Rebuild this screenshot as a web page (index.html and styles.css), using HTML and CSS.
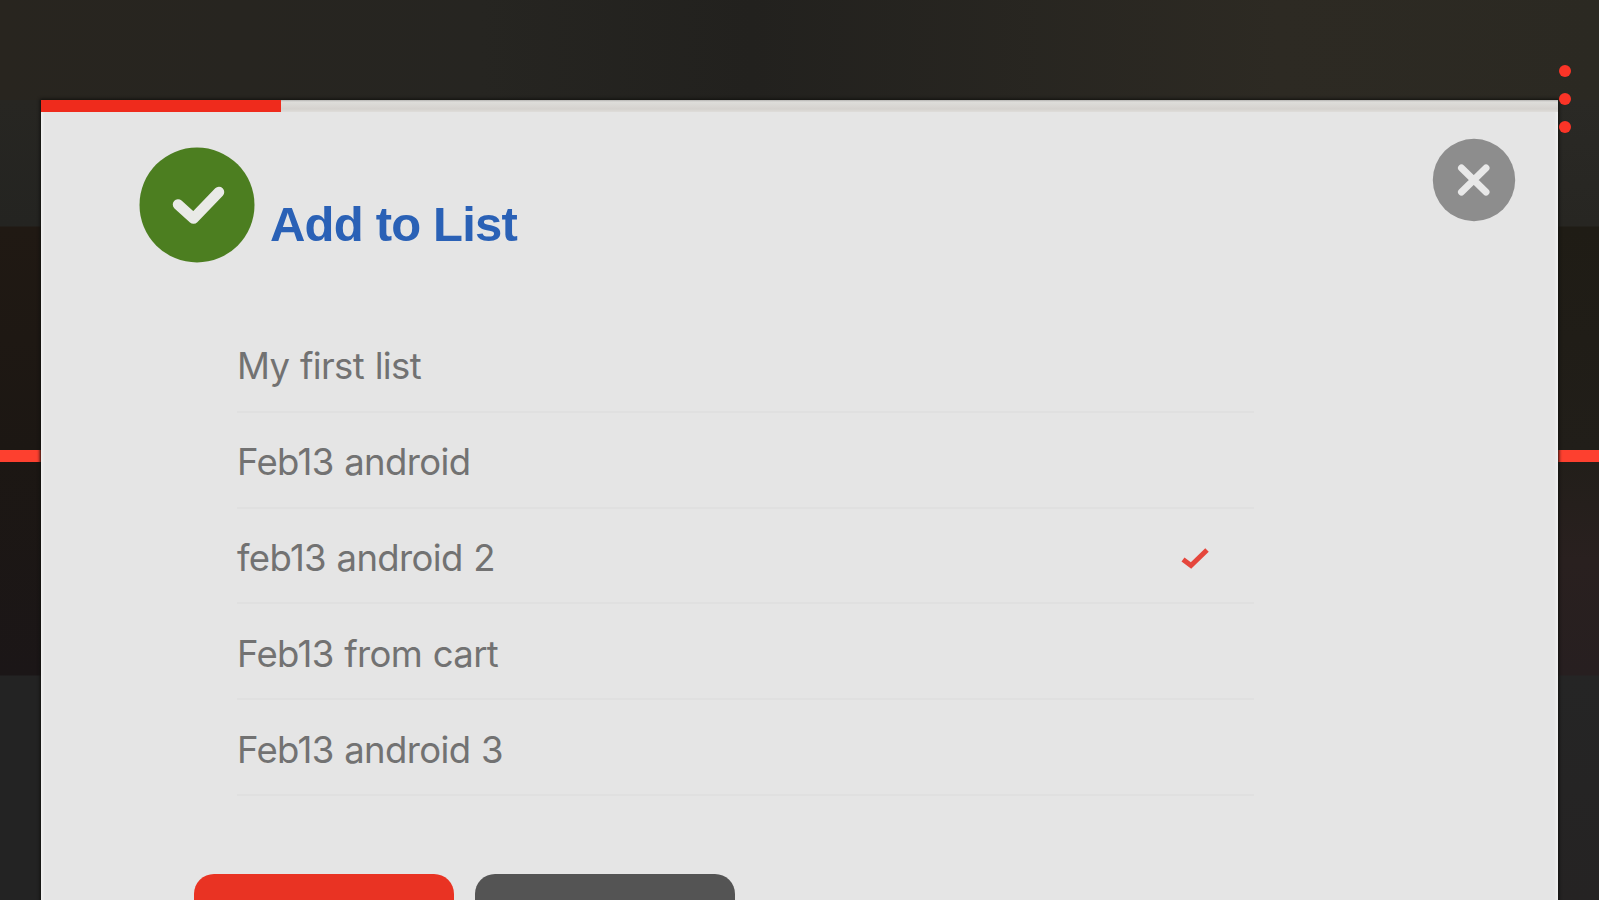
FILE: index.html
```html
<!DOCTYPE html>
<html lang="en">
<head>
    <meta charset="UTF-8">
    <meta name="viewport" content="width=device-width, initial-scale=1.0">
    <title>Add to List</title>
    <link rel="stylesheet" href="styles.css">
</head>
<body>
    <div class="modal">
        <div class="progress"><div class="progress-bar"></div></div>

        <!-- Header Section -->
        <div class="header">
            <svg class="success-icon" viewBox="0 0 116 116">
                <circle cx="58" cy="58" r="57.5" fill="#4c7e20"/>
                <path d="M39 57.5 L54.5 71.5 L80 45" fill="none" stroke="#e9eae7" stroke-width="10.5" stroke-linecap="round" stroke-linejoin="round"/>
            </svg>
            <h1>Add to List</h1>
            <button class="close-btn" aria-label="Close">
                <svg viewBox="0 0 84 84">
                    <circle cx="42" cy="42" r="41.2" fill="#8d8d8d"/>
                    <path d="M29.5 30 L54 54 M54 30 L29.5 54" stroke="#e8e8e8" stroke-width="7" stroke-linecap="round"/>
                </svg>
            </button>
        </div>

        <!-- Lists Section -->
        <ul class="lists">
            <li>My first list</li>
            <li>Feb13 android</li>
            <li>
                feb13 android 2
                <svg class="check" viewBox="0 0 32 26">
                    <path d="M4 14.5 L12 20.5 L28 5" fill="none" stroke="#e5463c" stroke-width="5"/>
                </svg>
            </li>
            <li>Feb13 from cart</li>
            <li>Feb13 android 3</li>
        </ul>

        <div class="actions">
            <button class="btn primary" aria-label="Add"></button>
            <button class="btn secondary" aria-label="Cancel"></button>
        </div>
    </div>

    <div class="more"><span></span><span></span><span></span></div>
</body>
</html>
```

FILE: styles.css
```css
* {
    box-sizing: border-box;
}
body {
    margin: 0;
    height: 900px;
    padding: 100px 41px 0;
    overflow: hidden;
    font-family: 'Inter', 'Liberation Sans', sans-serif;
    background:
        linear-gradient(#fd402f, #fd402f) 0 450px / 100% 12px no-repeat,
        linear-gradient(#2a2925 0, #272622 126px, #1f1c15 127px, #211e19 350px, #29201f 460px, #271f20 575px, #252525 576px, #252323 800px) 100% 100px / 800px 800px no-repeat,
        linear-gradient(#272622 0, #242421 126px, #201913 127px, #1c1713 350px, #1b1617 575px, #232323 576px, #232323 800px) 0 100px / 800px 800px no-repeat,
        linear-gradient(90deg, #28251f, #262521 30%, #22211e 47%, #2d2a23 80%, #2b2922);
}
.modal {
    width: 1517px;
    height: 820px;
    background: #e5e5e5;
    overflow: hidden;
    box-shadow: 0 0 3px 1px #10100e, inset 0 0 3px 2px #f0f0f0;
}
.progress {
    height: 12px;
    background: linear-gradient(#b5b4b2 0, #deddda 2px, #d5d2ce 9px, #dfddda 12px);
}
.progress-bar {
    width: 240px;
    height: 100%;
    background: #ef2b1c;
}
.header {
    display: flex;
    align-items: flex-start;
    height: 205px;
    padding: 26px 42px 0 98px;
}
.success-icon {
    width: 116px;
    height: 116px;
    margin-top: 9px;
}
.header h1 {
    margin: 56px 0 0 15px;
    font-family: 'Liberation Sans', Arial, sans-serif;
    font-size: 49px;
    font-weight: bold;
    line-height: 60px;
    letter-spacing: -0.8px;
    color: #2a61b6;
}
.close-btn {
    width: 84px;
    height: 84px;
    margin-left: auto;
    padding: 0;
    border: none;
    background: none;
    cursor: pointer;
}
.close-btn svg {
    display: block;
}
.lists {
    list-style: none;
    width: 1017px;
    margin: 0 0 0 196px;
    padding: 0;
}
.lists li {
    display: flex;
    align-items: center;
    justify-content: space-between;
    height: 95.8px;
    padding: 5px 43px 0 0;
    border-bottom: 2px solid #e0e0e0;
    font-size: 36.5px;
    letter-spacing: -0.65px;
    word-spacing: 1px;
    color: #727272;
}
.check {
    width: 32px;
    height: 26px;
}
.actions {
    display: flex;
    gap: 21px;
    margin: 78px 0 0 153px;
}
.btn {
    width: 260px;
    height: 80px;
    border: none;
    border-radius: 20px;
    cursor: pointer;
}
.primary {
    background: #e93323;
}
.secondary {
    background: #545454;
}
/* vertical dots menu over the corner of the modal */
.more {
    position: absolute;
    top: 65px;
    right: 28px;
    display: flex;
    flex-direction: column;
    gap: 16px;
}
.more span {
    width: 12px;
    height: 12px;
    border-radius: 50%;
    background: #fb3427;
}
```
